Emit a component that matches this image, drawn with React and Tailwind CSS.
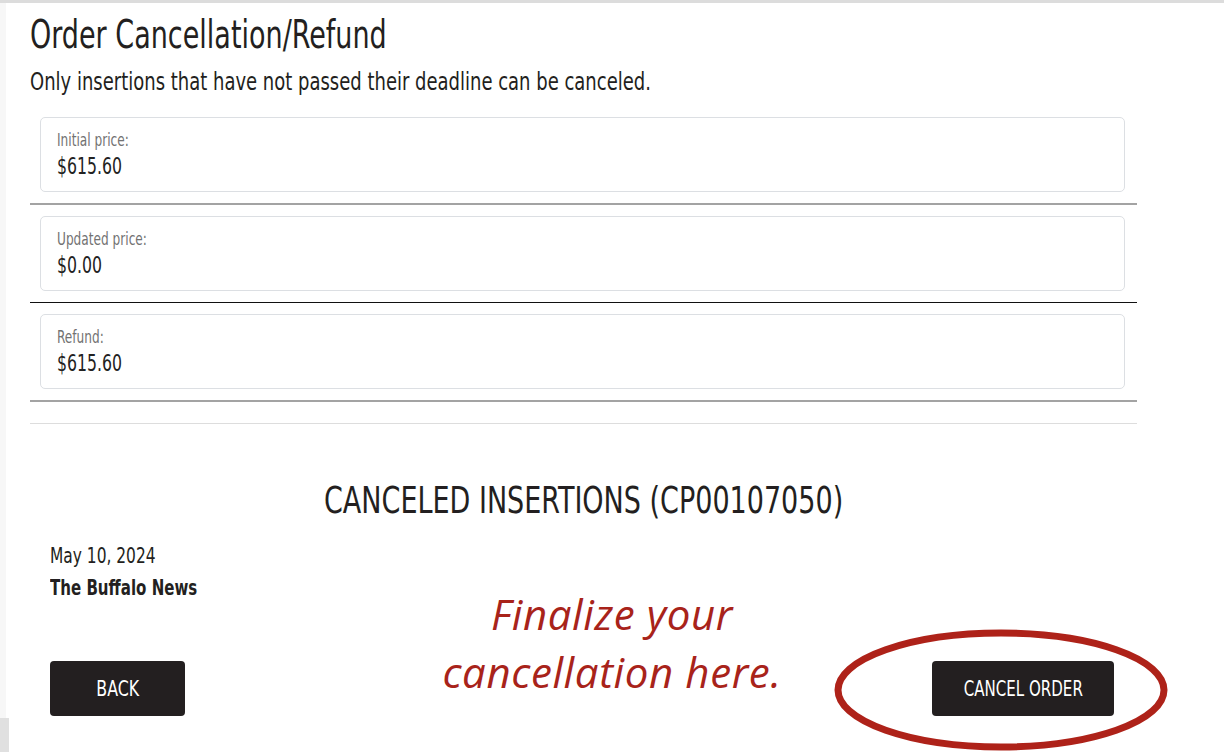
import React from "react";

const NARROW = {
  fontFamily: "'Liberation Sans Narrow', 'DejaVu Sans Condensed', 'Liberation Sans', sans-serif",
};

function PriceCard({ label, value }) {
  return (
    <div className="mx-[10px] mr-[12px] h-[75px] rounded-[5px] border border-[#dcdfe3] bg-white px-[16px] pt-[11px]">
      <div className="text-[18px] leading-[21px] text-[#727272]">
        <span className="inline-block origin-left scale-x-[0.75] whitespace-nowrap">{label}</span>
      </div>
      <div className="mt-[3px] text-[23px] leading-[27px] text-[#222222]">
        <span className="inline-block origin-left scale-x-[0.76] whitespace-nowrap">{value}</span>
      </div>
    </div>
  );
}

export default function App() {
  return (
    <div
      className="relative h-[752px] w-[1224px] overflow-hidden border-t-[3px] border-[#dcdcdc] bg-white"
      style={NARROW}
    >
      <div className="absolute left-0 top-0 h-[715px] w-[6px] bg-[#f7f7f7]" />
      <div className="absolute bottom-0 left-0 h-[34px] w-[9px] bg-[#e0e0e0]" />

      <div className="ml-[30px] w-[1107px] text-[#231f20]">
        <h1 className="pt-[10px] text-[39px] leading-[44px] text-[#231f20]">
          <span className="inline-block origin-left scale-x-[0.77] whitespace-nowrap">Order Cancellation/Refund</span>
        </h1>
        <p className="mt-[11px] text-[25px] leading-[28px]">
          <span className="inline-block origin-left scale-x-[0.8] whitespace-nowrap">
            Only insertions that have not passed their deadline can be canceled.
          </span>
        </p>

        <div className="mt-[21px]">
          <PriceCard label="Initial price:" value="$615.60" />
          <div className="mt-[11px] h-[2px] bg-[#a3a3a3]" />
          <div className="mt-[11px]">
            <PriceCard label="Updated price:" value="$0.00" />
          </div>
          <div className="mt-[11px] h-[1px] bg-[#111111]" />
          <div className="mt-[11px]">
            <PriceCard label="Refund:" value="$615.60" />
          </div>
          <div className="mt-[11px] h-[2px] bg-[#a3a3a3]" />
          <div className="mt-[21px] h-[1px] bg-[#dddddd]" />
        </div>

        <h2 className="mt-[56px] text-center text-[38px] leading-[40px]">
          <span className="inline-block origin-center scale-x-[0.79] whitespace-nowrap">
            CANCELED INSERTIONS (CP00107050)
          </span>
        </h2>

        <div className="ml-[20px] mt-[24px]">
          <div className="text-[22px] leading-[24px]">
            <span className="inline-block origin-left scale-x-[0.78] whitespace-nowrap">May 10, 2024</span>
          </div>
          <div className="mt-[8px] text-[22px] font-bold leading-[24px]">
            <span className="inline-block origin-left scale-x-[0.76] whitespace-nowrap">The Buffalo News</span>
          </div>
        </div>

        <div className="ml-[20px] mr-[23px] mt-[61px] flex items-center justify-between">
          <button className="flex h-[55px] w-[135px] items-center justify-center rounded-[4px] bg-[#231f20] text-[22px] text-white">
            <span className="inline-block origin-center scale-x-[0.8] whitespace-nowrap">BACK</span>
          </button>
          <button className="flex h-[55px] w-[182px] items-center justify-center rounded-[4px] bg-[#231f20] text-[22px] text-white">
            <span className="inline-block origin-center scale-x-[0.76] whitespace-nowrap">CANCEL ORDER</span>
          </button>
        </div>
      </div>

      <div
        className="absolute left-[400px] top-[582px] w-[424px] text-center text-[42px] italic leading-[58px] tracking-[0.6px] text-[#a8231a]"
        style={{ fontFamily: "'Open Sans', Lato, sans-serif" }}
      >
        Finalize your
        <br />
        cancellation here.
      </div>

      <svg className="absolute left-[832px] top-[624px]" width="340" height="128" viewBox="0 0 340 128">
        <ellipse cx="169" cy="63" rx="163" ry="57" fill="none" stroke="#ae2219" strokeWidth="7" />
      </svg>
    </div>
  );
}
